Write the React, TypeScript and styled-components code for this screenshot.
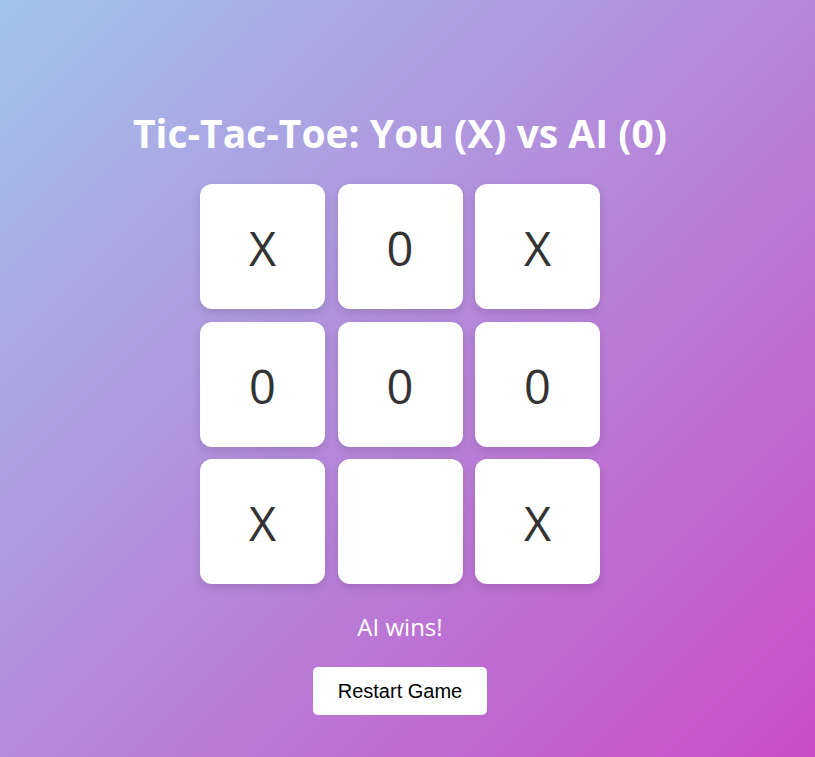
import * as React from "react";
import styled, { createGlobalStyle } from "styled-components";

const GlobalStyle = createGlobalStyle`
  html, body {
    margin: 0;
    padding: 0;
    height: 100%;
  }
  body {
    font-family: "Open Sans", "Noto Sans", sans-serif;
    background: linear-gradient(135deg, #a1c4ec 0%, #c94cc8 100%);
    background-attachment: fixed;
    min-height: 100vh;
  }
`;

const Page = styled.main`
  display: flex;
  flex-direction: column;
  align-items: center;
  padding: 106px 15px 0 0;
`;

const Title = styled.h1`
  margin: 0 0 24px;
  font-size: 39px;
  font-weight: 700;
  color: #fff;
  line-height: 54px;
`;

const Board = styled.div`
  display: grid;
  grid-template-columns: repeat(3, 125px);
  grid-auto-rows: 125px;
  gap: 12.5px;
`;

const Cell = styled.button`
  display: flex;
  align-items: center;
  justify-content: center;
  border: none;
  border-radius: 12px;
  background: #fff;
  box-shadow: 0 4px 10px rgba(0, 0, 0, 0.12);
  font-family: "Open Sans", "Noto Sans", sans-serif;
  font-size: 47px;
  font-weight: 400;
  color: #333;
  cursor: pointer;
  padding: 3px 0 0;
`;

const Status = styled.p`
  margin: 23px 0 20px;
  font-size: 24px;
  line-height: 40px;
  color: #fff;
`;

const RestartButton = styled.button`
  width: 174px;
  height: 48px;
  border: none;
  border-radius: 5px;
  background: #fff;
  color: #000;
  font-family: "Liberation Sans", Arial, sans-serif;
  font-size: 20px;
  cursor: pointer;
`;

const board = ["X", "0", "X", "0", "0", "0", "X", "", "X"];

export default function App() {
  return (
    <>
      <GlobalStyle />
      <Page>
        <Title>Tic-Tac-Toe: You (X) vs AI (0)</Title>
        <Board>
          {board.map((v, i) => (
            <Cell key={i}>{v}</Cell>
          ))}
        </Board>
        <Status>AI wins!</Status>
        <RestartButton>Restart Game</RestartButton>
      </Page>
    </>
  );
}
